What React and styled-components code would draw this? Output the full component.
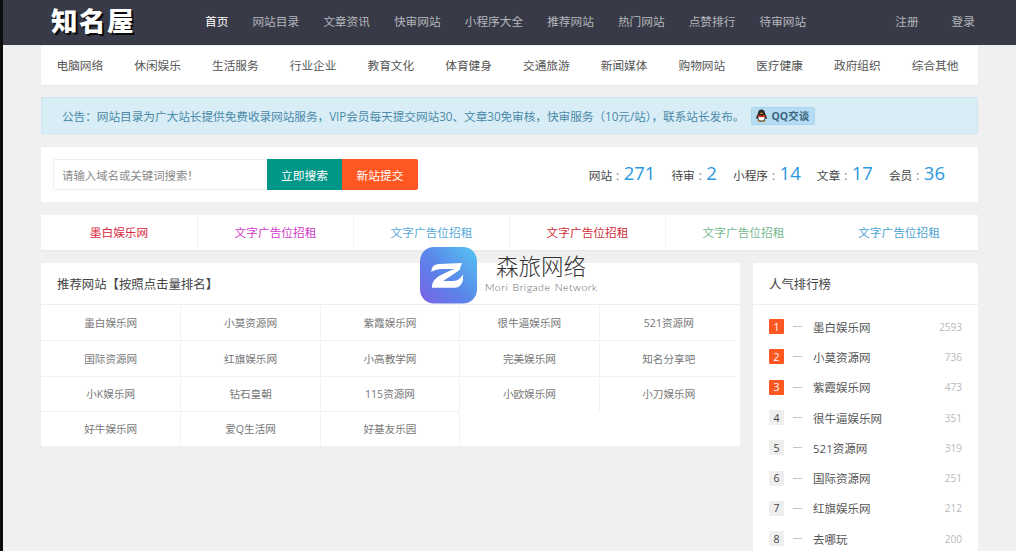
import React from 'react'
import styled, { createGlobalStyle } from 'styled-components'

const FONT = `'Open Sans', 'Noto Sans CJK SC', sans-serif`

const GlobalStyle = createGlobalStyle`
  html, body {
    margin: 0;
    padding: 0;
    background: #f0f0f0;
    font-family: ${FONT};
    font-size: 11.7px;
    color: #555;
  }
  * {
    box-sizing: border-box;
  }
`

const Page = styled.div`
  position: relative;
  width: 1016px;
  height: 551px;
  overflow: hidden;
  border-left: 3px solid #0c0c0c;
`
const Header = styled.header`
  height: 45px;
  background: #383b47;
  display: flex;
  align-items: center;
  padding: 0 41px 4px 48px;
`
const Logo = styled.div`
  width: 154px;
  font-size: 26.5px;
  font-weight: 900;
  letter-spacing: 1.5px;
  line-height: 42px;
  color: #fff;
  text-shadow: 2px 2px 0 #0b0b0b;
  margin-top: 1px;
`
const NavList = styled.nav`
  display: flex;
  flex: 1;
  gap: 24px;
`
const NavLink = styled.a`
  font-size: 11.7px;
  color: ${props => (props.$active ? '#fff' : '#b4b6bd')};
`
const UserLinks = styled.div`
  display: flex;
  gap: 33px;
`
const Main = styled.main`
  width: 937px;
  margin-left: 38px;
`
const CategoryBar = styled.div`
  margin-top: 1px;
  height: 39px;
  padding: 0 4px 2px 0;
  background: #fff;
  display: grid;
  grid-template-columns: repeat(12, 1fr);
  align-items: center;
  text-align: center;
  color: #555;
  box-shadow: 0 1px 1px #e8e8e8;
`
const Notice = styled.div`
  margin-top: 12px;
  height: 37px;
  background: #d9edf7;
  border: 1px solid #cbe6f0;
  border-radius: 2px;
  display: flex;
  align-items: center;
  padding-left: 20px;
  color: #4a8aa8;
  letter-spacing: -0.07px;
  white-space: nowrap;
`
const QQButton = styled.span`
  margin-left: 7px;
  width: 64px;
  height: 18px;
  border-radius: 2px;
  background: #b5dcf3;
  border: 1px solid #a9d5ee;
  display: inline-flex;
  align-items: center;
  gap: 3px;
  padding-left: 3px;
  font-size: 10.5px;
  font-weight: 700;
  letter-spacing: 0;
  color: #3c6580;
`
const SearchCard = styled.section`
  margin-top: 13px;
  height: 55px;
  background: #fff;
  display: flex;
  align-items: center;
  justify-content: space-between;
  padding: 0 33px 0 12px;
  border-radius: 2px;
`
const SearchForm = styled.div`
  display: flex;
  height: 31px;
`
const SearchInput = styled.div`
  width: 214px;
  border: 1px solid #eee;
  border-right: none;
  border-radius: 2px 0 0 2px;
  display: flex;
  align-items: center;
  padding-left: 8px;
  color: #8a8a8a;
  font-size: 11.4px;
`
const SearchButton = styled.button`
  width: ${props => props.$width}px;
  border: none;
  padding: 0;
  color: #fff;
  font: inherit;
  font-size: 11.7px;
  background: ${props => props.$color};
  border-radius: ${props => props.$radius || '0'};
`
const Stats = styled.div`
  display: flex;
  align-items: baseline;
  gap: 16px;
  margin-top: -4px;
  color: #444;
`
const Stat = styled.span`
  display: inline-flex;
  align-items: baseline;
  gap: 1px;
`
const StatColon = styled.span`
  color: #777;
  margin: 0 3.5px 0 3px;
`
const StatValue = styled.b`
  font-size: 18.5px;
  font-weight: 400;
  color: #2b97de;
`
const AdRow = styled.div`
  margin-top: 13px;
  height: 35px;
  padding: 0 1px 2px 0;
  background: #fff;
  display: grid;
  grid-template-columns: repeat(6, 1fr);
  box-shadow: 0 1px 1px #e8e8e8;
`
const AdCell = styled.a`
  display: flex;
  align-items: center;
  justify-content: center;
  color: ${props => props.$color};
  border-left: ${props => (props.$first ? 'none' : '1px solid #f2f2f2')};
  &:last-child {
    border-left: none;
  }
`
const Columns = styled.div`
  margin-top: 13px;
  display: grid;
  grid-template-columns: 699px 225px;
  gap: 13px;
  align-items: start;
`
const Panel = styled.section`
  background: #fff;
  border-radius: 2px;
`
const PanelTitle = styled.h3`
  margin: 0;
  height: 42px;
  display: flex;
  align-items: center;
  padding-left: 16px;
  font-size: 12.4px;
  font-weight: 400;
  color: #444;
  border-bottom: 1px solid #eee;
`
const SiteGrid = styled.div`
  display: grid;
  grid-template-columns: repeat(5, 139.4px);
  grid-auto-rows: 35.25px;
`
const SiteCell = styled.a`
  display: flex;
  align-items: center;
  justify-content: center;
  font-size: 10.6px;
  color: #777;
  border-left: ${props => (props.$col === 0 ? 'none' : '1px solid #f2f2f2')};
  border-top: ${props => (props.$row === 0 ? 'none' : '1px solid #f2f2f2')};
`
const SiteFiller = styled.div`
  grid-column: 4 / 6;
  border-left: 1px solid #f2f2f2;
`
const RankList = styled.ol`
  list-style: none;
  margin: 0;
  padding: 6.5px 16px 0 16px;
`
const RankRow = styled.li`
  height: 30.3px;
  display: flex;
  align-items: center;
`
const RankBadge = styled.span`
  width: 15px;
  height: 15px;
  border-radius: 1px;
  display: flex;
  align-items: center;
  justify-content: center;
  font-size: 10.5px;
  background: ${props => (props.$hot ? '#ff5722' : '#eee')};
  color: ${props => (props.$hot ? '#fff' : '#444')};
`
const RankDash = styled.span`
  width: 9px;
  height: 1px;
  background: #c4c4c4;
  margin: 0 11px 0 9px;
`
const RankName = styled.a`
  flex: 1;
  font-size: 11.5px;
  color: #555;
`
const RankCount = styled.span`
  font-size: 10px;
  color: #b9b9b9;
`
const Watermark = styled.div`
  position: absolute;
  left: 417px;
  top: 247px;
  display: flex;
  align-items: flex-start;
`
const WatermarkText = styled.div`
  margin-left: 8px;
  width: 112px;
  text-align: center;
`
const WatermarkTitle = styled.div`
  margin-top: 6px;
  font-size: 22.5px;
  line-height: 28px;
  font-weight: 300;
  color: #333;
`
const WatermarkSub = styled.div`
  margin-top: 1px;
  font-family: 'Lato', sans-serif;
  font-size: 10.5px;
  line-height: 11px;
  font-weight: 300;
  color: #666;
  letter-spacing: 0.5px;
  word-spacing: 1px;
  white-space: nowrap;
`

const navItems = ['网站目录', '文章资讯', '快审网站', '小程序大全', '推荐网站', '热门网站', '点赞排行', '待审网站']
const categories = ['电脑网络', '休闲娱乐', '生活服务', '行业企业', '教育文化', '体育健身', '交通旅游', '新闻媒体', '购物网站', '医疗健康', '政府组织', '综合其他']
const stats = [['网站', 271], ['待审', 2], ['小程序', 14], ['文章', 17], ['会员', 36]]
const ads = [
  ['墨白娱乐网', '#d9263a'],
  ['文字广告位招租', '#d03bc8'],
  ['文字广告位招租', '#55a9d8'],
  ['文字广告位招租', '#cf3038'],
  ['文字广告位招租', '#74b88e'],
  ['文字广告位招租', '#4ba3d3']
]
const sites = [
  '墨白娱乐网', '小莫资源网', '紫霞娱乐网', '很牛逼娱乐网', '521资源网',
  '国际资源网', '红旗娱乐网', '小高教学网', '完美娱乐网', '知名分享吧',
  '小K娱乐网', '钻石皇朝', '115资源网', '小欧娱乐网', '小刀娱乐网',
  '好牛娱乐网', '爱Q生活网', '好基友乐园'
]
const ranks = [
  ['墨白娱乐网', 2593], ['小莫资源网', 736], ['紫霞娱乐网', 473], ['很牛逼娱乐网', 351],
  ['521资源网', 319], ['国际资源网', 251], ['红旗娱乐网', 212], ['去哪玩', 200]
]

const Penguin = () => (
  <svg width="13" height="14" viewBox="0 0 13 14">
    <path d="M6.500 0.500C4 0.500 3 2.500 3 4.500C2 6 1 8 1.200 9.600C1.500 10.600 2.200 9.800 2.600 9.200C2.800 10 3.100 10.600 3.600 11.100C2.600 11.500 2.400 12.600 3.800 12.800C5 13 5.800 12.600 6.500 12.400C7.200 12.600 8 13 9.200 12.800C10.600 12.600 10.400 11.500 9.400 11.100C9.900 10.600 10.200 10 10.400 9.200C10.800 9.800 11.500 10.600 11.800 9.600C12 8 11 6 10 4.500C10 2.500 9 0.500 6.500 0.500Z" fill="#2a2a2a" />
    <path d="M3.600 7.400C5.500 8 7.500 8 9.400 7.400C9.900 8.800 9.500 10.200 8.700 11C7.400 11.800 5.600 11.800 4.300 11C3.500 10.200 3.100 8.800 3.600 7.400Z" fill="#fff" />
    <path d="M2.900 5.800C5 7 8 7 10.100 5.800L10.400 7.400C8 8.500 5 8.500 2.600 7.400Z" fill="#e8321f" />
    <path d="M5 4.300C5.600 3.700 7.400 3.700 8 4.300C7.400 5.200 5.600 5.200 5 4.300Z" fill="#f4a81d" />
    <path d="M3 12C3.800 11.200 5 11.600 5.600 12.600C4.600 13.200 3.400 13 3 12ZM10 12C9.200 11.200 8 11.600 7.400 12.600C8.400 13.200 9.600 13 10 12Z" fill="#f4a81d" />
  </svg>
)

const BrandIcon = () => (
  <svg width="57" height="57" viewBox="0 0 57 57">
    <defs>
      <linearGradient id="brandGrad" x1="0" y1="1" x2="1" y2="0.1">
        <stop offset="0" stopColor="#7a63e4" />
        <stop offset="0.5" stopColor="#5a86ea" />
        <stop offset="1" stopColor="#56c0f2" />
      </linearGradient>
    </defs>
    <rect x="0" y="0" width="57" height="56.5" rx="14" fill="url(#brandGrad)" />
    <path d="M11.300 24.700C11.500 20 14 17.300 19 17L42 16L39.700 22L22 22C18 22 15.500 22.800 11.300 24.700Z" fill="#fff" />
    <path d="M12 40.700C12 36 13.500 33 18 29.700C23 26.500 29 24 34.700 22L40.700 22L31.300 28.700L23 34L33 34C38 34 41 31 43 27.300L43 33C42 37.500 39 40.700 35 40.700Z" fill="#fff" />
  </svg>
)

const App = () => (
  <Page>
    <GlobalStyle />
    <Header>
      <Logo>知名屋</Logo>
      <NavList>
        <NavLink $active>首页</NavLink>
        {navItems.map(item => (
          <NavLink key={item}>{item}</NavLink>
        ))}
      </NavList>
      <UserLinks>
        <NavLink>注册</NavLink>
        <NavLink>登录</NavLink>
      </UserLinks>
    </Header>
    <Main>
      <CategoryBar>
        {categories.map(item => (
          <a key={item}>{item}</a>
        ))}
      </CategoryBar>
      <Notice>
        公告：网站目录为广大站长提供免费收录网站服务，VIP会员每天提交网站30、文章30免审核，快审服务（10元/站），联系站长发布。
        <QQButton>
          <Penguin />
          QQ交谈
        </QQButton>
      </Notice>
      <SearchCard>
        <SearchForm>
          <SearchInput>请输入域名或关键词搜索！</SearchInput>
          <SearchButton $width={75} $color="#009688">立即搜索</SearchButton>
          <SearchButton $width={76} $color="#ff5722" $radius="0 2px 2px 0">新站提交</SearchButton>
        </SearchForm>
        <Stats>
          {stats.map(([label, value]) => (
            <Stat key={label}>
              {label}
              <StatColon>:</StatColon>
              <StatValue>{value}</StatValue>
            </Stat>
          ))}
        </Stats>
      </SearchCard>
      <AdRow>
        {ads.map(([text, color], i) => (
          <AdCell key={i} $color={color} $first={i === 0}>{text}</AdCell>
        ))}
      </AdRow>
      <Columns>
        <Panel>
          <PanelTitle>推荐网站【按照点击量排名】</PanelTitle>
          <SiteGrid>
            {sites.map((name, i) => (
              <SiteCell key={name} $col={i % 5} $row={Math.floor(i / 5)}>{name}</SiteCell>
            ))}
            <SiteFiller />
          </SiteGrid>
        </Panel>
        <Panel>
          <PanelTitle>人气排行榜</PanelTitle>
          <RankList>
            {ranks.map(([name, count], i) => (
              <RankRow key={name}>
                <RankBadge $hot={i < 3}>{i + 1}</RankBadge>
                <RankDash />
                <RankName>{name}</RankName>
                <RankCount>{count}</RankCount>
              </RankRow>
            ))}
          </RankList>
        </Panel>
      </Columns>
    </Main>
    <Watermark>
      <BrandIcon />
      <WatermarkText>
        <WatermarkTitle>森旅网络</WatermarkTitle>
        <WatermarkSub>Mori Brigade Network</WatermarkSub>
      </WatermarkText>
    </Watermark>
  </Page>
)

export default App
